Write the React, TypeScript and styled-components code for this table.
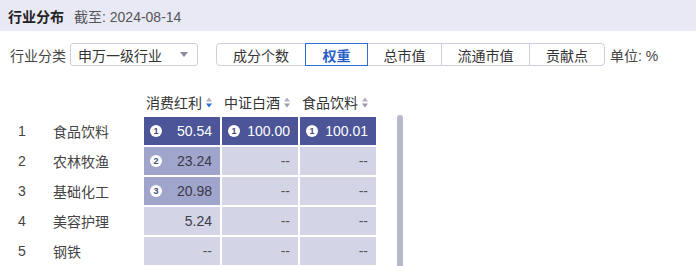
import React from "react";
import styled, { createGlobalStyle } from "styled-components";

const GlobalStyle = createGlobalStyle`
  html, body {
    margin: 0;
    padding: 0;
    overflow: hidden;
    background: #ffffff;
    font-family: "Liberation Sans", "Noto Sans CJK SC", sans-serif;
    color: #333;
  }
`;

const Page = styled.div`
  width: 696px;
  height: 266px;
  display: flex;
  flex-direction: column;
`;

const TitleBar = styled.div`
  height: 31px;
  background: #e9e9f5;
  display: flex;
  align-items: center;
  padding-left: 8px;
  gap: 10px;
  font-size: 14px;
`;

const Title = styled.span`
  font-weight: bold;
  color: #222;
`;

const DateText = styled.span`
  color: #555;
`;

const Toolbar = styled.div`
  display: flex;
  align-items: center;
  margin-top: 12px;
  padding-left: 10px;
  font-size: 14px;
`;

const Label = styled.span`
  color: #444;
`;

const Select = styled.div`
  margin-left: 4px;
  width: 128px;
  height: 23px;
  box-sizing: border-box;
  border: 1px solid #cfcfe3;
  border-radius: 3px;
  display: flex;
  align-items: center;
  justify-content: space-between;
  padding: 0 9px 0 7px;
  color: #333;
`;

const Caret = styled.span`
  width: 0;
  height: 0;
  border-left: 4px solid transparent;
  border-right: 4px solid transparent;
  border-top: 5px solid #8a8a9a;
`;

const Group = styled.div`
  margin-left: 18px;
  display: flex;
  height: 23px;
`;

const Seg = styled.div<{ $active?: boolean; $w: number }>`
  width: ${(p) => p.$w}px;
  box-sizing: border-box;
  display: flex;
  align-items: center;
  justify-content: center;
  border: 1px solid ${(p) => (p.$active ? "#2b6fd6" : "#cfcfe3")};
  margin-left: -1px;
  color: ${(p) => (p.$active ? "#2b5fc6" : "#333")};
  font-weight: ${(p) => (p.$active ? "bold" : "normal")};
  position: ${(p) => (p.$active ? "relative" : "static")};
  z-index: ${(p) => (p.$active ? 1 : 0)};

  &:first-child {
    margin-left: 0;
    border-radius: 4px 0 0 4px;
  }
  &:last-child {
    border-radius: 0 4px 4px 0;
  }
`;

const Unit = styled.span`
  margin-left: 5px;
  color: #444;
`;

const TableArea = styled.div`
  margin-top: 23px;
  display: flex;
  flex: 1;
  min-height: 0;
  overflow: hidden;
`;

const Grid = styled.div`
  display: grid;
  grid-template-columns: 51px 89px 76px 76px 76px;
  grid-auto-rows: 28px;
  grid-template-rows: 26px;
  column-gap: 2px;
  row-gap: 2px;
  font-size: 14px;
  align-content: start;
`;

const HeadCell = styled.div`
  display: flex;
  align-items: center;
  gap: 4px;
  padding-left: 2px;
  color: #333;
`;

const Blank = styled.div``;

const IndexCell = styled.div`
  display: flex;
  align-items: center;
  padding-left: 18px;
  color: #444;
`;

const NameCell = styled.div`
  display: flex;
  align-items: center;
  color: #444;
`;

type Tone = "dark" | "mid" | "light";

const toneBg: Record<Tone, string> = {
  dark: "#4b5597",
  mid: "#a0a5cb",
  light: "#d3d5e7",
};

const ValueCell = styled.div<{ $tone: Tone }>`
  background: ${(p) => toneBg[p.$tone]};
  color: ${(p) => (p.$tone === "dark" ? "#ffffff" : "#3a3a4a")};
  display: flex;
  align-items: center;
  padding: 0 8px 0 6px;
`;

const Value = styled.span<{ $dash?: boolean }>`
  margin-left: auto;
  color: ${(p) => (p.$dash ? "#555" : "inherit")};
`;

const Badge = styled.span`
  width: 12px;
  height: 12px;
  border-radius: 50%;
  background: #fff;
  color: #444a7a;
  font-size: 9px;
  font-weight: bold;
  display: inline-flex;
  align-items: center;
  justify-content: center;
  line-height: 1;
`;

const ScrollTrack = styled.div`
  margin-left: 21px;
  margin-top: 26px;
  width: 6px;
  background: #b8b8cb;
  border-radius: 3px 3px 0 0;
  flex: none;
`;

function SortIcon({ active }: { active?: boolean }) {
  return (
    <svg width="6" height="11" viewBox="0 0 6 11">
      <path d="M3 0.5 L6 4.5 L0 4.5 Z" fill="#b0b0c0" />
      <path d="M0 6.5 L6 6.5 L3 10.5 Z" fill={active ? "#2b6fd6" : "#9a9aac"} />
    </svg>
  );
}

type Cell = { v: string; rank?: number; tone: Tone };

const rows: { name: string; cells: Cell[] }[] = [
  {
    name: "食品饮料",
    cells: [
      { v: "50.54", rank: 1, tone: "dark" },
      { v: "100.00", rank: 1, tone: "dark" },
      { v: "100.01", rank: 1, tone: "dark" },
    ],
  },
  {
    name: "农林牧渔",
    cells: [
      { v: "23.24", rank: 2, tone: "mid" },
      { v: "--", tone: "light" },
      { v: "--", tone: "light" },
    ],
  },
  {
    name: "基础化工",
    cells: [
      { v: "20.98", rank: 3, tone: "mid" },
      { v: "--", tone: "light" },
      { v: "--", tone: "light" },
    ],
  },
  {
    name: "美容护理",
    cells: [
      { v: "5.24", tone: "light" },
      { v: "--", tone: "light" },
      { v: "--", tone: "light" },
    ],
  },
  {
    name: "钢铁",
    cells: [
      { v: "--", tone: "light" },
      { v: "--", tone: "light" },
      { v: "--", tone: "light" },
    ],
  },
];

const segments = [
  { label: "成分个数", w: 90 },
  { label: "权重", w: 63, active: true },
  { label: "总市值", w: 75 },
  { label: "流通市值", w: 89 },
  { label: "贡献点", w: 76 },
];

export default function App() {
  return (
    <Page>
      <GlobalStyle />
      <TitleBar>
        <Title>行业分布</Title>
        <DateText>截至: 2024-08-14</DateText>
      </TitleBar>
      <Toolbar>
        <Label>行业分类</Label>
        <Select>
          <span>申万一级行业</span>
          <Caret />
        </Select>
        <Group>
          {segments.map((s) => (
            <Seg key={s.label} $w={s.w} $active={s.active}>
              {s.label}
            </Seg>
          ))}
        </Group>
        <Unit>单位: %</Unit>
      </Toolbar>
      <TableArea>
        <Grid>
          <Blank />
          <Blank />
          <HeadCell>
            消费红利 <SortIcon active />
          </HeadCell>
          <HeadCell>
            中证白酒 <SortIcon />
          </HeadCell>
          <HeadCell>
            食品饮料 <SortIcon />
          </HeadCell>
          {rows.map((r, i) => (
            <React.Fragment key={r.name}>
              <IndexCell>{i + 1}</IndexCell>
              <NameCell>{r.name}</NameCell>
              {r.cells.map((c, j) => (
                <ValueCell key={j} $tone={c.tone}>
                  {c.rank ? <Badge>{c.rank}</Badge> : null}
                  <Value $dash={c.v === "--"}>{c.v}</Value>
                </ValueCell>
              ))}
            </React.Fragment>
          ))}
        </Grid>
        <ScrollTrack />
      </TableArea>
    </Page>
  );
}
